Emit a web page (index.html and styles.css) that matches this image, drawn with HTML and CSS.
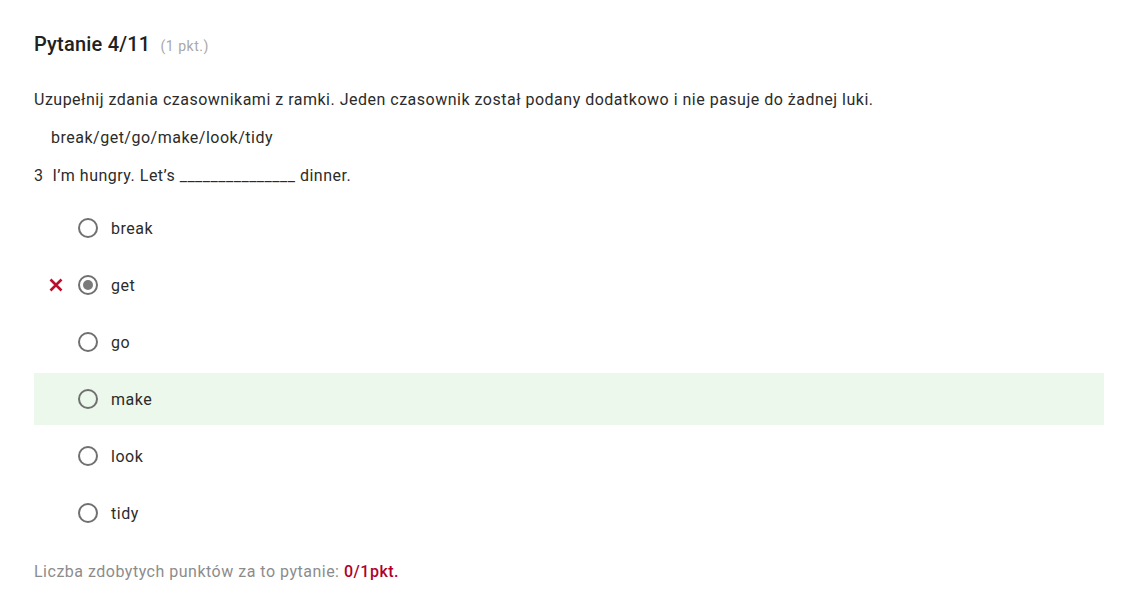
FILE: index.html
```html
<!DOCTYPE html>
<html lang="pl">
  <head>
    <meta charset="UTF-8">
    <meta name="viewport" content="width=device-width, initial-scale=1">
    <title>Pytanie 4/11</title>
    <link rel="stylesheet" href="styles.css">
  </head>
  <body>
    <div class="question">
      <h2 class="q-title">Pytanie 4/11 <span class="q-points">(1 pkt.)</span></h2>
      <p class="q-text">Uzupełnij zdania czasownikami z ramki. Jeden czasownik został podany dodatkowo i nie pasuje do żadnej luki.</p>
      <p class="q-words">break/get/go/make/look/tidy</p>
      <p class="q-sentence">3&nbsp; I’m hungry. Let’s _______________ dinner.</p>

      <div class="answers">
        <div class="answer">
          <span class="mark"></span>
          <span class="radio"></span>
          <span class="label">break</span>
        </div>
        <div class="answer">
          <span class="mark wrong">
            <svg width="14" height="14" viewBox="0 0 14 14"><path d="M1.5 1.5 L12.5 12.5 M12.5 1.5 L1.5 12.5" stroke="#b8102c" stroke-width="2.6"/></svg>
          </span>
          <span class="radio checked"></span>
          <span class="label">get</span>
        </div>
        <div class="answer">
          <span class="mark"></span>
          <span class="radio"></span>
          <span class="label">go</span>
        </div>
        <div class="answer correct">
          <span class="mark"></span>
          <span class="radio"></span>
          <span class="label">make</span>
        </div>
        <div class="answer">
          <span class="mark"></span>
          <span class="radio"></span>
          <span class="label">look</span>
        </div>
        <div class="answer">
          <span class="mark"></span>
          <span class="radio"></span>
          <span class="label">tidy</span>
        </div>
      </div>

      <p class="q-score">Liczba zdobytych punktów za to pytanie: <b>0/1pkt.</b></p>
    </div>
  </body>
</html>
```

FILE: styles.css
```css
body {
  margin: 0;
  background-color: #ffffff;
  font-family: Roboto, "Noto Sans", sans-serif;
  color: #2b2b2b;
}

.question {
  padding: 32px 22px 0 34px;
}

.q-title {
  margin: 0;
  font-size: 20px;
  font-weight: 500;
  line-height: 24px;
  letter-spacing: 0.2px;
  color: #212121;
}
.q-points {
  margin-left: 5px;
  font-size: 14px;
  font-weight: 400;
  letter-spacing: 0.5px;
  color: #a8a8a8;
}

.q-text, .q-words, .q-sentence {
  margin: 0;
  font-size: 16px;
  line-height: 24px;
  letter-spacing: 0.5px;
}
.q-text { margin-top: 30px; }
.q-words {
  margin-top: 14px;
  padding-left: 17px;
}
.q-sentence { margin-top: 14px; }

.answers {
  margin-top: 14px;
}
.answer {
  display: flex;
  align-items: center;
  height: 52px;
  margin-bottom: 5px;
}
.answer.correct {
  background-color: #ebf8eb;
}
.mark {
  display: flex;
  justify-content: center;
  align-items: center;
  width: 44px;
}
.radio {
  box-sizing: border-box;
  width: 20px;
  height: 20px;
  border: 2px solid #707070;
  border-radius: 50%;
  position: relative;
}
.radio.checked::after {
  content: "";
  position: absolute;
  top: 3px;
  left: 3px;
  width: 10px;
  height: 10px;
  border-radius: 50%;
  background-color: #7a7a7a;
}
.label {
  margin-left: 13px;
  font-size: 16px;
  letter-spacing: 0.5px;
}

.q-score {
  margin: 21px 0 0 0;
  font-size: 16px;
  line-height: 24px;
  letter-spacing: 0.5px;
  color: #8c8c8c;
}
.q-score b {
  font-weight: 500;
  color: #b0002b;
}
```
